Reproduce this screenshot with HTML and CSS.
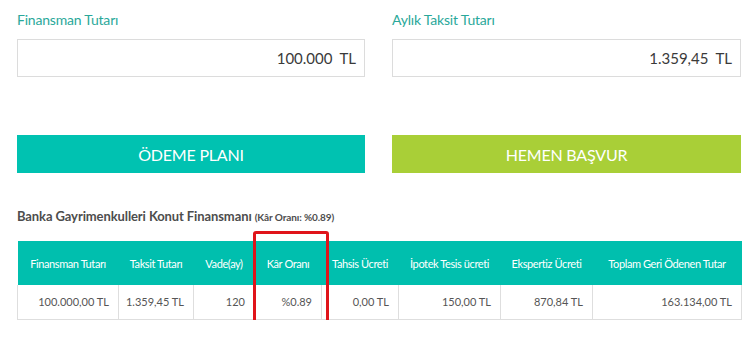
FILE: index.html
```html
<!DOCTYPE html>
<html lang="tr">
<head>
<meta charset="utf-8">
<title>Konut Finansmanı</title>
<link rel="stylesheet" href="styles.css">
</head>
<body>
<div class="page">
  <div class="fields">
    <div class="field">
      <label class="field-label">Finansman Tutarı</label>
      <div class="field-input"><span class="num">100.000</span><span class="cur">TL</span></div>
    </div>
    <div class="field">
      <label class="field-label">Aylık Taksit Tutarı</label>
      <div class="field-input"><span class="num">1.359,45</span><span class="cur">TL</span></div>
    </div>
  </div>
  <div class="actions">
    <button class="btn btn-teal">ÖDEME PLANI</button>
    <button class="btn btn-green">HEMEN BAŞVUR</button>
  </div>
  <h3 class="title">Banka Gayrimenkulleri Konut Finansmanı <small>(Kâr Oranı: %0.89)</small></h3>
  <div class="table-wrap">
    <table class="plan">
      <colgroup>
        <col style="width:101px"><col style="width:75px"><col style="width:61px"><col style="width:67px">
        <col style="width:77px"><col style="width:102px"><col style="width:92px"><col style="width:149px">
      </colgroup>
      <thead>
        <tr>
          <th>Finansman Tutarı</th>
          <th>Taksit Tutarı</th>
          <th>Vade(ay)</th>
          <th>Kâr Oranı</th>
          <th>Tahsis Ücreti</th>
          <th>İpotek Tesis ücreti</th>
          <th>Ekspertiz Ücreti</th>
          <th>Toplam Geri Ödenen Tutar</th>
        </tr>
      </thead>
      <tbody>
        <tr>
          <td>100.000,00 TL</td>
          <td>1.359,45 TL</td>
          <td>120</td>
          <td>%0.89</td>
          <td>0,00 TL</td>
          <td>150,00 TL</td>
          <td>870,84 TL</td>
          <td>163.134,00 TL</td>
        </tr>
      </tbody>
    </table>
    <div class="highlight"></div>
  </div>
</div>
</body>
</html>
```
FILE: styles.css
```css
* { box-sizing: border-box; }
html, body { margin: 0; padding: 0; background: #fff; }
body { font-family: Lato, "Open Sans", "Liberation Sans", sans-serif; color: #444; }

.page { padding: 11px 9px 0 17px; width: 750px; }

.fields { display: grid; grid-template-columns: 348px 349px; column-gap: 27px; }
.field-label { display: block; font-size: 14px; line-height: 18px; color: #2aa89a; letter-spacing: -0.2px; }
.field-input {
  margin-top: 10px; height: 38px; border: 1px solid #dcdcdc;
  display: flex; align-items: center; justify-content: flex-end;
  padding-right: 8px; font-size: 15px; color: #3a3a3a;
}
.field-input .cur { margin-left: 7px; }

.actions { display: grid; grid-template-columns: 348px 349px; column-gap: 27px; margin-top: 58px; }
.btn {
  height: 38px; border: 0; color: #fff; font-family: inherit; font-size: 16px;
  letter-spacing: -0.2px; padding: 0; cursor: pointer;
}
.btn-teal { background: #00c2b1; }
.btn-green { background: #a9cf37; }

.title { margin: 34px 0 0; font-size: 13px; line-height: 18px; font-weight: 700; color: #4d4d4d; letter-spacing: -0.1px; }
.title small { font-size: 10px; }

.table-wrap { position: relative; margin-top: 15px; width: 724px; }
.plan { border-collapse: collapse; table-layout: fixed; width: 724px; }
.plan th {
  background: #00bfae; color: #fff; font-weight: 400; font-size: 11px;
  height: 44px; padding: 0 2px; text-align: center; letter-spacing: -0.4px; white-space: nowrap;
}
.plan td {
  height: 34px; line-height: 14px; border: 1px solid #dedede; border-top: 0; text-align: right;
  padding: 0 9px 0 4px; font-size: 11px; color: #555; white-space: nowrap;
}
.highlight {
  position: absolute; left: 236px; top: -10px; width: 76px; height: 101px;
  border: 3px solid #e0141a; border-radius: 3px;
}
```
